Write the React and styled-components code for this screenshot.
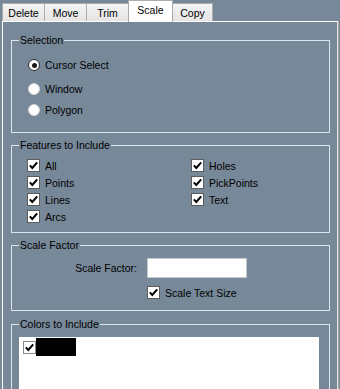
import React from "react";
import styled, { createGlobalStyle } from "styled-components";

const GlobalStyle = createGlobalStyle`
  html, body {
    margin: 0;
    padding: 0;
    background: #778899;
  }
  body {
    font-family: "Liberation Sans", Arial, sans-serif;
    font-size: 10.5px;
    color: #000;
  }
`;

const Screen = styled.div`
  width: 340px;
  height: 389px;
  overflow: hidden;
  background: #778899;
`;

const TabStrip = styled.div`
  display: flex;
  align-items: flex-end;
  height: 21px;
  padding-left: 2px;
`;

const Tab = styled.div`
  position: relative;
  z-index: ${(p) => (p.$active ? 1 : 0)};
  box-sizing: border-box;
  width: ${(p) => p.$w}px;
  height: ${(p) => (p.$active ? 22 : 18)}px;
  margin-left: -1px;
  margin-bottom: ${(p) => (p.$active ? -1 : 0)}px;
  &:first-child {
    margin-left: 0;
  }
  border: 1px solid #acacac;
  border-bottom: none;
  background: ${(p) =>
    p.$active ? "#fff" : "linear-gradient(#f3f3f3, #e5e5e5)"};
  display: flex;
  justify-content: center;
  align-items: flex-start;
  padding-top: ${(p) => (p.$active ? 3 : 3)}px;
  line-height: 12px;
`;

const Panel = styled.div`
  box-sizing: border-box;
  margin-left: 2px;
  width: 336px;
  height: 368px;
  border-top: 1px solid #fff;
  border-left: 1px solid #fff;
  border-right: 1px solid #e4e4e4;
  box-shadow: 1px 0 0 #a9a9a9;
  padding: 18px 7px 0 8px;
  display: flex;
  flex-direction: column;
  gap: 12px;
`;

const Group = styled.div`
  position: relative;
  box-sizing: border-box;
  flex: none;
  height: ${(p) => p.$h}px;
  margin-top: ${(p) => p.$mt || 0}px;
  border: 1px solid #dde4ec;
  padding: ${(p) => p.$pad};
`;

const Legend = styled.span`
  position: absolute;
  top: -7px;
  left: 7px;
  padding: 0 1px;
  line-height: 12px;
  background: #778899;
`;

const RadioList = styled.div`
  display: flex;
  flex-direction: column;
  gap: 7px;
  & > :first-child {
    margin-bottom: 3px;
  }
`;

const Option = styled.label`
  display: flex;
  align-items: center;
  gap: 5px;
  height: 14px;
  line-height: 12px;
`;

const RadioDot = styled.span`
  box-sizing: border-box;
  width: 12px;
  height: 12px;
  border-radius: 50%;
  background: #fff;
  border: 1px solid ${(p) => (p.$on ? "#2b2b2b" : "#d4d4d4")};
  display: flex;
  align-items: center;
  justify-content: center;
  &::after {
    content: "";
    display: ${(p) => (p.$on ? "block" : "none")};
    width: 5px;
    height: 5px;
    border-radius: 50%;
    background: #1a1a1a;
  }
`;

const FeatureGrid = styled.div`
  display: grid;
  grid-template-columns: 164px 1fr;
  grid-auto-rows: 17px;
  align-items: center;
`;

const Box = styled.span`
  box-sizing: border-box;
  flex: none;
  width: 13px;
  height: 13px;
  background: #fff;
  border: 1px solid ${(p) => p.$edge || "#5c5c5c"};
  display: flex;
  align-items: center;
  justify-content: center;
`;

const FactorRow = styled.div`
  display: flex;
  align-items: center;
`;

const FactorLabel = styled.span`
  width: 125px;
  text-align: right;
`;

const TextBox = styled.div`
  box-sizing: border-box;
  width: 100px;
  height: 20px;
  margin-left: 10px;
  background: #fff;
  border: 1px solid #c4c8cc;
`;

const ScaleCheck = styled(Option)`
  margin-top: 8px;
  padding-left: 135px;
  height: 13px;
`;

const ListBox = styled.div`
  width: 300px;
  height: 60px;
  background: #fff;
  padding: 1px 0 0 4px;
  box-sizing: border-box;
`;

const ListItem = styled.div`
  display: flex;
  align-items: center;
`;

const Swatch = styled.span`
  width: 40px;
  height: 18px;
  background: ${(p) => p.$color};
`;

function Check({ edge }) {
  return (
    <Box $edge={edge}>
      <svg width="11" height="11" viewBox="0 0 11 11">
        <path d="M1.8 5.4 L4.3 8 L9.2 2.4" fill="none" stroke="#000" strokeWidth="2" />
      </svg>
    </Box>
  );
}

function CheckOption({ children }) {
  return (
    <Option>
      <Check />
      {children}
    </Option>
  );
}

const tabs = [
  { name: "Delete", w: 43 },
  { name: "Move", w: 43 },
  { name: "Trim", w: 43 },
  { name: "Scale", w: 45, active: true },
  { name: "Copy", w: 41 },
];

const features = ["All", "Holes", "Points", "PickPoints", "Lines", "Text", "Arcs"];

export default function App() {
  return (
    <Screen>
      <GlobalStyle />
      <TabStrip>
        {tabs.map((t) => (
          <Tab key={t.name} $w={t.w} $active={t.active}>
            {t.name}
          </Tab>
        ))}
      </TabStrip>
      <Panel>
        <Group $h={93} $pad="17px 0 0 16px">
          <Legend>Selection</Legend>
          <RadioList>
            <Option>
              <RadioDot $on />
              Cursor Select
            </Option>
            <Option>
              <RadioDot />
              Window
            </Option>
            <Option>
              <RadioDot />
              Polygon
            </Option>
          </RadioList>
        </Group>

        <Group $h={88} $pad="11px 0 0 15px">
          <Legend>Features to Include</Legend>
          <FeatureGrid>
            {features.map((f) => (
              <CheckOption key={f}>{f}</CheckOption>
            ))}
          </FeatureGrid>
        </Group>

        <Group $h={66} $pad="12px 0 0 0">
          <Legend>Scale Factor</Legend>
          <FactorRow>
            <FactorLabel>Scale Factor:</FactorLabel>
            <TextBox />
          </FactorRow>
          <ScaleCheck>
            <Check />
            Scale Text Size
          </ScaleCheck>
        </Group>

        <Group $h={90} $mt={1} $pad="12px 0 0 7px">
          <Legend>Colors to Include</Legend>
          <ListBox>
            <ListItem>
              <Check edge="#8a8a8a" />
              <Swatch $color="#000" />
            </ListItem>
          </ListBox>
        </Group>
      </Panel>
    </Screen>
  );
}
